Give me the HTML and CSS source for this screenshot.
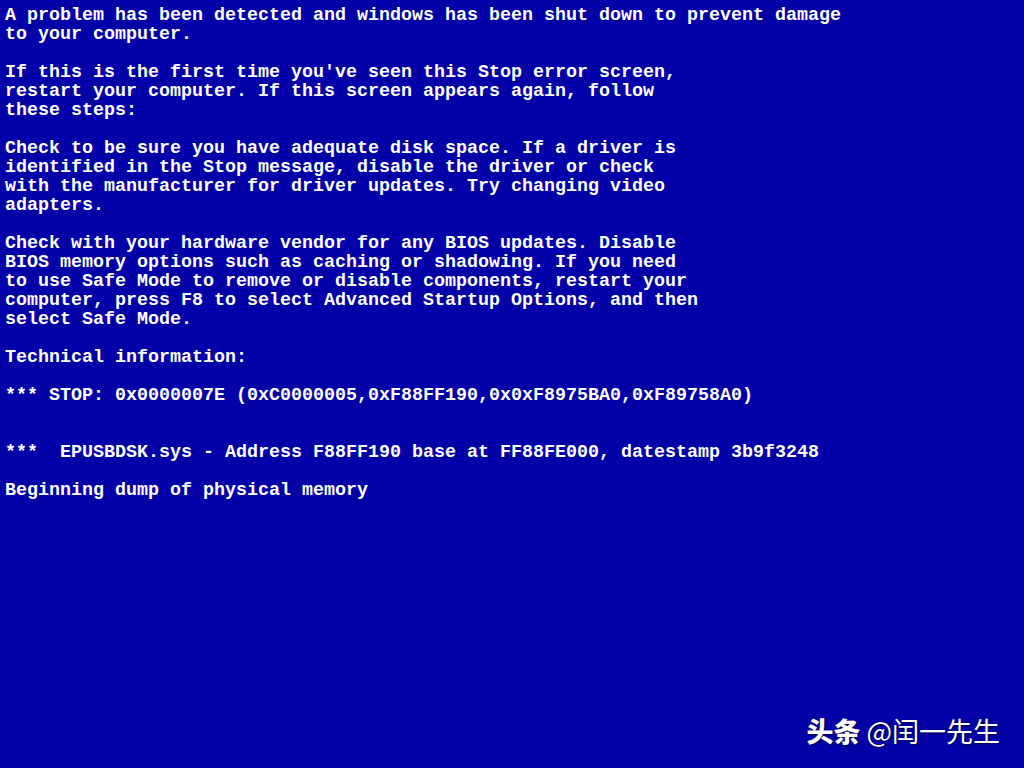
FILE: index.html
```html
<!DOCTYPE html>
<html lang="en">
<head>
  <meta charset="utf-8">
  <title>stop error</title>
  <link rel="stylesheet" href="styles.css">
</head>
<body>
  <!-- stop screen text -->
  <pre class="screen">A problem has been detected and windows has been shut down to prevent damage
to your computer.

If this is the first time you've seen this Stop error screen,
restart your computer. If this screen appears again, follow
these steps:

Check to be sure you have adequate disk space. If a driver is
identified in the Stop message, disable the driver or check
with the manufacturer for driver updates. Try changing video
adapters.

Check with your hardware vendor for any BIOS updates. Disable
BIOS memory options such as caching or shadowing. If you need
to use Safe Mode to remove or disable components, restart your
computer, press F8 to select Advanced Startup Options, and then
select Safe Mode.

Technical information:

*** STOP: 0x0000007E (0xC0000005,0xF88FF190,0x0xF8975BA0,0xF89758A0)


***  EPUSBDSK.sys - Address F88FF190 base at FF88FE000, datestamp 3b9f3248

Beginning dump of physical memory</pre>
  <!-- watermark -->
  <div class="watermark"><b>头条</b> @闰一先生</div>
</body>
</html>
```
FILE: styles.css
```css
* {
  margin: 0;
  padding: 0;
  box-sizing: border-box;
}
html, body {
  height: 100%;
}
body {
  background: #0300a8;
  color: #fff;
  overflow: hidden;
  position: relative;
}
/* courier-like bold mono text */
.screen {
  font-family: "Liberation Mono", "Courier New", monospace;
  font-weight: bold;
  font-size: 18.33px;
  line-height: 19px;
  padding: 6px 0 0 5px;
  white-space: pre;
}
.watermark {
  position: absolute;
  right: 24px;
  bottom: 22px;
  font-family: "Noto Sans CJK SC", "Noto Sans", sans-serif;
  font-size: 27px;
  line-height: 30px;
  color: #fff;
  text-shadow: 1px 1px 2px rgba(0, 0, 0, 0.6);
}
.watermark b {
  font-weight: 900;
}
```
